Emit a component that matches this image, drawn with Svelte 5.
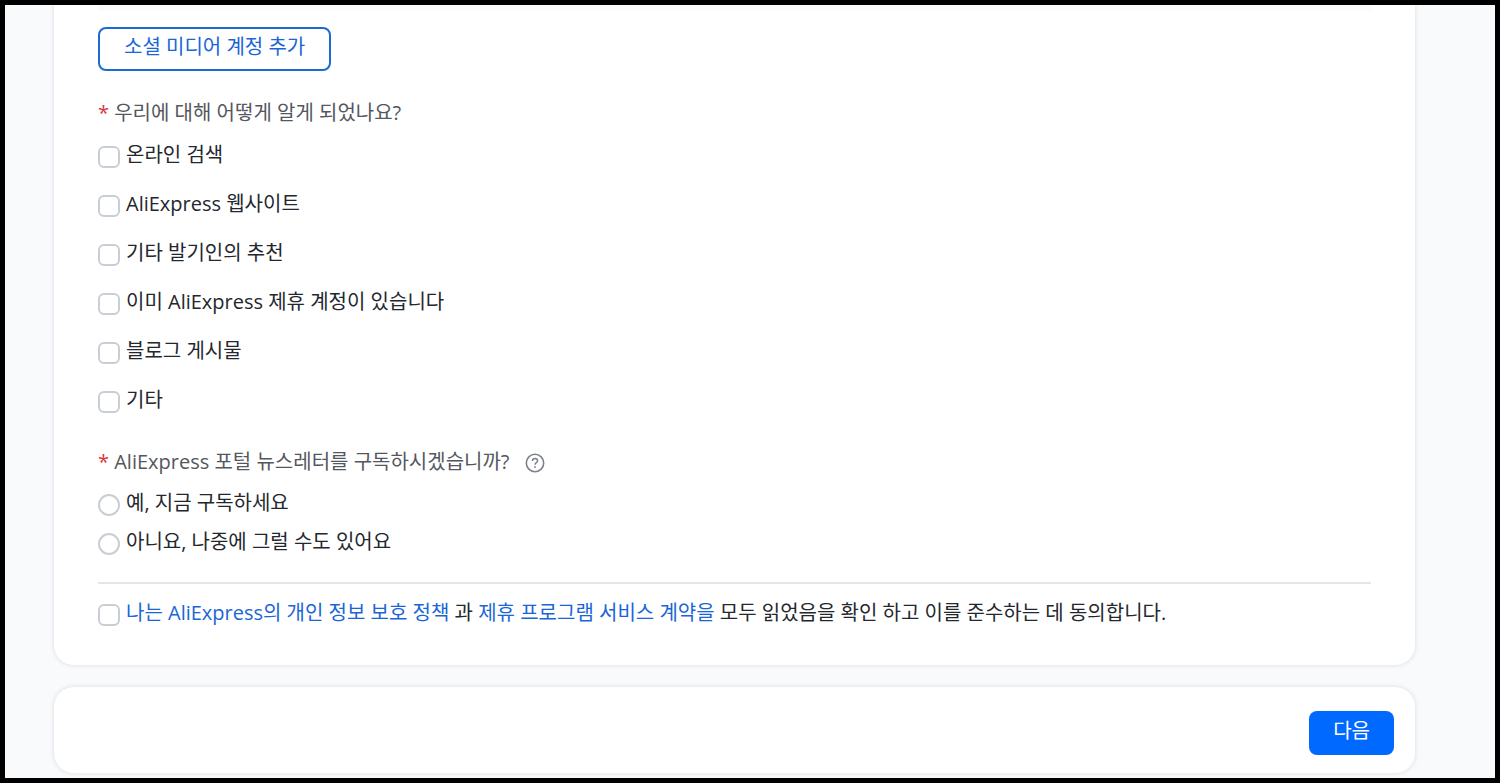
<script lang="ts">
	const sources = [
		'온라인 검색',
		'AliExpress 웹사이트',
		'기타 발기인의 추천',
		'이미 AliExpress 제휴 계정이 있습니다',
		'블로그 게시물',
		'기타'
	];

	const newsletterOptions = [
		{ value: 'yes', label: '예, 지금 구독하세요' },
		{ value: 'no', label: '아니요, 나중에 그럴 수도 있어요' }
	];

	let selectedSources: string[] = $state([]);
	let newsletter = $state('');
	let agreed = $state(false);
</script>

<main class="page">
	<form class="form" onsubmit={(e) => e.preventDefault()}>
		<section class="card details">
			<div class="account-panel"></div>
			<button type="button" class="btn btn-outline">소셜 미디어 계정 추가</button>

			<fieldset class="sources">
				<legend><span class="required">*</span> 우리에 대해 어떻게 알게 되었나요?</legend>
				<div class="options">
					{#each sources as source}
						<label class="option">
							<input type="checkbox" value={source} bind:group={selectedSources} />
							<span>{source}</span>
						</label>
					{/each}
				</div>
			</fieldset>

			<fieldset class="newsletter">
				<legend>
					<span class="required">*</span> AliExpress 포털 뉴스레터를 구독하시겠습니까?
					<button type="button" class="help" aria-label="도움말">
						<svg viewBox="0 0 20 20" width="20" height="20" fill="none" stroke="currentColor">
							<circle cx="10" cy="10" r="8.7" stroke-width="1.6" />
							<path
								d="M7.4 8.1c0-1.6 1.1-2.6 2.6-2.6s2.6 1 2.6 2.3c0 1.9-2.6 1.9-2.6 4"
								stroke-width="1.5"
							/>
							<circle cx="10" cy="14" r="0.9" fill="currentColor" stroke="none" />
						</svg>
					</button>
				</legend>
				<div class="options options-tight">
					{#each newsletterOptions as option}
						<label class="option">
							<input type="radio" name="newsletter" value={option.value} bind:group={newsletter} />
							<span>{option.label}</span>
						</label>
					{/each}
				</div>
			</fieldset>

			<hr />

			<div class="option">
				<input id="agree" type="checkbox" bind:checked={agreed} />
				<label for="agree">
					<a href="#privacy">나는 AliExpress의 개인 정보 보호 정책</a> 과
					<a href="#agreement">제휴 프로그램 서비스 계약을</a> 모두 읽었음을 확인 하고 이를 준수하는 데 동의합니다.
				</label>
			</div>
		</section>

		<section class="card actions">
			<button type="submit" class="btn btn-primary">다음</button>
		</section>
	</form>
</main>

<style>
	:global(body) {
		margin: 0;
	}

	.page {
		box-sizing: border-box;
		min-height: 100vh;
		padding: 0 80px 4px 49px;
		border: 5px solid #000;
		background: #f9fafc;
		color: #24272e;
		font-family: 'Open Sans', 'Noto Sans CJK KR', sans-serif;
		font-size: 20px;
		line-height: 28px;
	}

	.form {
		display: flex;
		flex-direction: column;
		gap: 22px;
	}

	.card {
		background: #fff;
		border-radius: 20px;
		box-shadow: 0 0 5px rgba(30, 35, 50, 0.14);
	}

	.details {
		padding: 0 44px 36px;
		border-top-left-radius: 0;
		border-top-right-radius: 0;
		clip-path: inset(0 -8px -8px -8px);
	}

	.account-panel {
		height: 6px;
		margin-bottom: 16px;
		background: #fafbfd;
	}

	.btn {
		display: block;
		box-sizing: border-box;
		height: 44px;
		padding: 0 24px 4px;
		border: 0;
		border-radius: 8px;
		font: inherit;
		cursor: pointer;
	}

	.btn-outline {
		border: 2px solid #1b6cd0;
		background: #fff;
		color: #1a66d6;
	}

	.btn-primary {
		margin-left: auto;
		background: #0069ff;
		color: #fff;
	}

	fieldset {
		min-width: 0;
		margin: 0;
		padding: 0;
		border: 0;
	}

	legend {
		display: block;
		padding: 0;
		color: #54575e;
	}

	.sources {
		margin-top: 28px;
	}

	.newsletter {
		margin-top: 32px;
	}

	.required {
		color: #d9363e;
	}

	.help {
		width: 20px;
		height: 20px;
		margin-left: 10px;
		padding: 0;
		border: 0;
		background: none;
		color: #7d828c;
		vertical-align: -4px;
		cursor: pointer;
	}

	.help svg {
		display: block;
	}

	.options {
		display: flex;
		flex-direction: column;
		align-items: flex-start;
		gap: 21px;
		margin-top: 16px;
	}

	.options-tight {
		gap: 11px;
		margin-top: 15px;
	}

	.option {
		display: flex;
		align-items: center;
		gap: 6px;
	}

	.option > :last-child {
		padding-bottom: 2px;
		margin-top: -2px;
	}

	input {
		appearance: none;
		flex-shrink: 0;
		box-sizing: border-box;
		width: 22px;
		height: 22px;
		margin: 0;
		border: 2px solid #c9cdd4;
		border-radius: 6px;
		background: #fff;
	}

	input[type='radio'] {
		border-radius: 50%;
	}

	input:checked {
		border-color: #0069ff;
		background: #0069ff;
		box-shadow: inset 0 0 0 3px #fff;
	}

	hr {
		height: 2px;
		margin: 24px 0 17px;
		border: 0;
		background: #e4e5e7;
	}

	a {
		color: #1a66d6;
		text-decoration: none;
	}

	.actions {
		padding: 24px 21px 18px;
	}
</style>
